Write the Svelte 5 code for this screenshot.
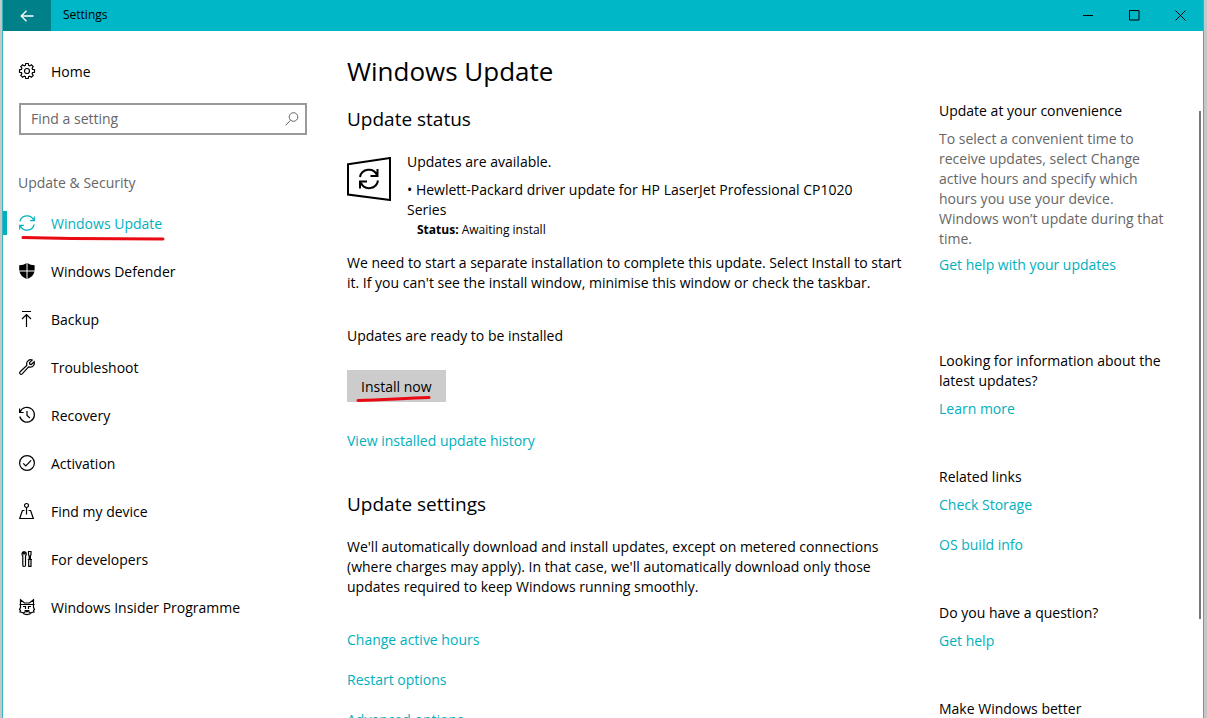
<script>
  const items = [
    { id: 'update', label: 'Windows Update', active: true },
    { id: 'defender', label: 'Windows Defender' },
    { id: 'backup', label: 'Backup' },
    { id: 'troubleshoot', label: 'Troubleshoot' },
    { id: 'recovery', label: 'Recovery' },
    { id: 'activation', label: 'Activation' },
    { id: 'find', label: 'Find my device' },
    { id: 'developers', label: 'For developers' },
    { id: 'insider', label: 'Windows Insider Programme' }
  ];
  let query = $state('');
</script>

{#snippet icon(id)}
  <svg class="icon" viewBox="0 0 16 16" aria-hidden="true">
    {#if id === 'home'}
      <path d="M6.700.5h2.600l.3 1.900 1.200.5 1.600-1.100 1.800 1.800-1.100 1.600.5 1.200 1.900.3v2.600l-1.900.3-.5 1.200 1.100 1.600-1.800 1.800-1.600-1.100-1.200.5-.3 1.900H6.700l-.3-1.900-1.200-.5-1.600 1.100-1.800-1.800 1.100-1.600-.5-1.200L.5 9.300V6.700l1.900-.3.5-1.200-1.100-1.600 1.800-1.800 1.600 1.100 1.200-.5z" />
      <circle cx="8" cy="8" r="2.500" />
    {:else if id === 'update'}
      <path d="M.8 6.500A7.400 7.400 0 0 1 14.800 5.500M15.200 9.500A7.400 7.400 0 0 1 1.200 10.500M15.300 1.500v4.200h-4.200M.7 14.500v-4.200h4.200" />
    {:else if id === 'defender'}
      <path class="solid" d="M7.500 0v7.500H.2V2.200C3 2.200 5.500 1.500 7.500 0zM8.500 0c2 1.500 4.500 2.200 7.100 2.200v5.300H8.500zM.4 8.500h7.100V16C3.700 14.400 1.200 11.800.4 8.500zM8.500 8.500h7c-.6 3.300-3.100 5.900-7 7.500z" />
    {:else if id === 'backup'}
      <path d="M3 .5h9M7.500 16V3.500M3 8l4.500-4.500L12 8" />
    {:else if id === 'troubleshoot'}
      <path d="M13.200 1 10.500 3.700l.3 1.500 1.500.3L15.200 2.700C16 5.500 14.200 8.200 11.200 8.100L9.600 7.900 3.200 14.800C1.800 16.200-.3 14.200 1.100 12.800L7.800 6.500 7.600 4.800C7.600 2 10.500-.2 13.200 1z" />
    {:else if id === 'recovery'}
      <path d="M1.200 4.800A7.400 7.400 0 1 1 .8 9.500M.6 1.500v4h4M8 4v4.500l3 2.500" />
    {:else if id === 'activation'}
      <circle cx="8" cy="8" r="7.400" />
      <path d="M4.200 8.300 6.800 11l5.300-5.700" />
    {:else if id === 'find'}
      <circle cx="7.500" cy="2.500" r="2" />
      <path d="M7.500 4.500v7M5.500 7.500H3.400L.7 15.500h13.600l-2.700-8H9.500" />
    {:else if id === 'developers'}
      <path d="M4.500 3V.8C2.600 1.300 2.600 4 3.800 4.800V14.200c0 1.700 2.700 1.700 2.700 0V4.800C7.700 4 7.700 1.300 5.800.8V3zM9.500.5h2.500v3L11.400 5v3.500H10.200V5L9.500 3.500zM8.800 8.500h4.200M9.700 8.500V15.300h2.300V8.500" />
    {:else if id === 'insider'}
      <path d="M1.500 6V.700L5.500 4h5L14.500.7V6M.5 5.500h15M1.500 5.500v3L.5 10.500l1 1-.5 1.500 2.500.5c1.500 2.700 7.500 2.700 9 0L15 13l-.5-1.500 1-1-1-2v-3M4 7.500h2.500v2.500M12 7.500H9.500v2.500M6.500 11.500h3L8 13zM4.500 14l2-1.500M11.500 14l-2-1.500" />
    {/if}
  </svg>
{/snippet}

<div class="window">
  <header>
    <button class="back" aria-label="Back">
      <svg viewBox="0 0 14 12" width="14" height="12"><path d="M13.500 6H1M6.500.700 1.200 6l5.300 5.300" /></svg>
    </button>
    <span class="title">Settings</span>
    <button class="caption" aria-label="Minimise"><svg viewBox="0 0 11 11"><path d="M0 5.500h10" /></svg></button>
    <button class="caption" aria-label="Maximise"><svg viewBox="0 0 11 11"><path d="M.5.500h9.500v9.500H.5z" /></svg></button>
    <button class="caption" aria-label="Close"><svg viewBox="0 0 11 11"><path d="m.5.500 10 10m0-10-10 10" /></svg></button>
  </header>

  <div class="body">
    <nav>
      <a class="item" href="#home">{@render icon('home')}<span>Home</span></a>
      <div class="search">
        <input type="text" aria-label="Find a setting" placeholder="Find a setting" bind:value={query} />
        <svg viewBox="0 0 14 14" width="14" height="14" aria-hidden="true"><circle cx="8.500" cy="5" r="4.300" /><path d="M5.500 8.200.7 13.300" /></svg>
      </div>
      <p class="section">Update &amp; Security</p>
      <ul>
        {#each items as item}
          <li>
            <a class="item" class:active={item.active} href="#{item.id}">
              {@render icon(item.id)}<span>{item.label}</span>
            </a>
            {#if item.active}
              <svg class="mark nav-mark" viewBox="0 0 146 6" aria-hidden="true"><path d="M2 2.500 50 3.500 142 4" /></svg>
            {/if}
          </li>
        {/each}
      </ul>
    </nav>

    <main>
      <h1>Windows Update</h1>
      <h2>Update status</h2>
      <div class="status">
        <svg class="status-icon" viewBox="0 0 44 44" aria-hidden="true">
          <path d="M1 7.300 43 1v42L1 37.500z" />
          <path d="M13 20a9 9 0 0 1 17-2M31 23.500a9 9 0 0 1-17 2.500M30.500 12v7h-7M13 31.500v-7h7" />
        </svg>
        <div>
          <p>Updates are available.</p>
          <p class="driver">• Hewlett-Packard driver update for HP LaserJet Professional CP1020 Series</p>
          <p class="state"><b>Status:</b> Awaiting install</p>
        </div>
      </div>
      <p class="explain">We need to start a separate installation to complete this update. Select Install to start it. If you can't see the install window, minimise this window or check the taskbar.</p>
      <p class="ready">Updates are ready to be installed</p>
      <button class="install">
        Install now
        <svg class="mark install-mark" viewBox="0 0 76 8" aria-hidden="true"><path d="M2 5.500C25 5 45 3.500 73 2.500" /></svg>
      </button>
      <a class="history" href="#history">View installed update history</a>
      <h2 class="settings">Update settings</h2>
      <p class="auto">We'll automatically download and install updates, except on metered connections (where charges may apply). In that case, we'll automatically download only those updates required to keep Windows running smoothly.</p>
      <div class="links">
        <a href="#hours">Change active hours</a>
        <a href="#restart">Restart options</a>
        <a href="#advanced">Advanced options</a>
      </div>
    </main>

    <aside>
      <section class="first">
        <h3>Update at your convenience</h3>
        <p>To select a convenient time to receive updates, select Change active hours and specify which hours you use your device. Windows won’t update during that time.</p>
        <a href="#help-updates">Get help with your updates</a>
      </section>
      <section>
        <h3>Looking for information about the latest updates?</h3>
        <a href="#learn">Learn more</a>
      </section>
      <section class="related">
        <h3>Related links</h3>
        <a href="#storage">Check Storage</a>
        <a href="#build">OS build info</a>
      </section>
      <section>
        <h3>Do you have a question?</h3>
        <a href="#help">Get help</a>
      </section>
      <section>
        <h3>Make Windows better</h3>
      </section>
    </aside>
    <div class="scrollbar"></div>
  </div>
</div>

<style>
  :global(body) {
    background: #c6c6c8;
    font: 14px/20px 'Open Sans', 'Noto Sans', sans-serif;
    color: #000;
  }
  .window {
    box-sizing: border-box;
    display: flex;
    flex-direction: column;
    height: 100vh;
    margin: 0 3px 0 2px;
    border: solid #35b5bd;
    border-width: 0 1px;
    background: #fff;
    overflow: hidden;
  }
  h1, h2, h3, p, ul { margin: 0; padding: 0; font-weight: 400; }
  a { color: #00b0bd; text-decoration: none; }
  button { border: 0; padding: 0; font: inherit; color: inherit; }
  svg { fill: none; stroke: currentColor; }

  header {
    flex: none;
    display: flex;
    height: 31px;
    background: #00b7c7;
  }
  .back {
    display: flex;
    align-items: center;
    justify-content: center;
    width: 48px;
    background: #008089;
    color: #fff;
  }
  .back svg { stroke-width: 1.3; }
  .title { flex: 1; padding-left: 12px; font-size: 12px; line-height: 30px; }
  .caption {
    display: flex;
    align-items: center;
    justify-content: center;
    width: 46px;
    background: none;
  }
  .caption svg { width: 11px; height: 11px; }

  .body {
    position: relative;
    flex: 1;
    display: flex;
    min-height: 0;
  }
  nav { flex: none; width: 304px; padding: 16px 40px 0 0; }
  ul { list-style: none; }
  li { position: relative; }
  .item {
    display: flex;
    align-items: center;
    gap: 16px;
    height: 48px;
    padding-left: 16px;
    color: #000;
  }
  .item span { padding-top: 2px; }
  .item.active { position: relative; color: #00b0bd; }
  .item.active::before {
    content: '';
    position: absolute;
    left: 0;
    width: 4px;
    height: 24px;
    background: #00b0bd;
  }
  .icon { width: 16px; height: 16px; overflow: visible; stroke-width: 1.2; }
  .solid { fill: currentColor; stroke: none; }
  .search {
    display: flex;
    align-items: center;
    height: 28px;
    margin: 8px 0 0 16px;
    padding-right: 6px;
    border: 2px solid #999;
    color: #666;
  }
  .search input {
    flex: 1;
    min-width: 0;
    padding: 0 10px;
    border: 0;
    outline: 0;
    background: none;
    font: inherit;
  }
  .search input::placeholder { color: #666; opacity: 1; }
  .section { margin: 38px 0 6px 15px; color: #666; }

  .mark { position: absolute; stroke: #ea0a14; stroke-width: 3; stroke-linecap: round; }
  .nav-mark { left: 18px; top: 36px; width: 146px; height: 6px; }
  .install-mark { left: 9px; top: 25px; width: 76px; height: 8px; }

  main { flex: 1; min-width: 0; padding: 22px 24px 0 0; }
  h1 { font-size: 26px; line-height: 36px; }
  h2 { margin-top: 16px; font-size: 19px; line-height: 28px; }
  .status { display: flex; gap: 16px; margin-top: 19px; padding-right: 32px; }
  .status-icon { flex: none; width: 44px; height: 44px; margin-top: 5px; stroke-width: 2; }
  .driver { margin-top: 8px; }
  .state { padding-left: 10px; font-size: 12px; }
  .explain { margin-top: 13px; }
  .ready { margin-top: 33px; }
  .install {
    position: relative;
    display: block;
    height: 32px;
    margin-top: 24px;
    padding: 1px 14px 0;
    background: #ccc;
  }
  .history { display: block; margin-top: 29px; }
  .settings { margin-top: 39px; }
  .auto { margin-top: 19px; }
  .links { display: grid; gap: 20px; margin-top: 33px; }

  aside { flex: none; width: 232px; padding: 70px 32px 0 0; }
  h3 { font-size: 14px; line-height: 20px; }
  section { margin-bottom: 48px; }
  section a { display: block; margin-top: 8px; }
  .first { margin-bottom: 76px; }
  .first p { margin-top: 8px; color: #666; }
  .first a { margin-top: 6px; }
  .related a + a { margin-top: 20px; }
  .scrollbar {
    position: absolute;
    top: 80px;
    right: 2px;
    width: 2px;
    height: 74%;
    background: #777;
  }
</style>
